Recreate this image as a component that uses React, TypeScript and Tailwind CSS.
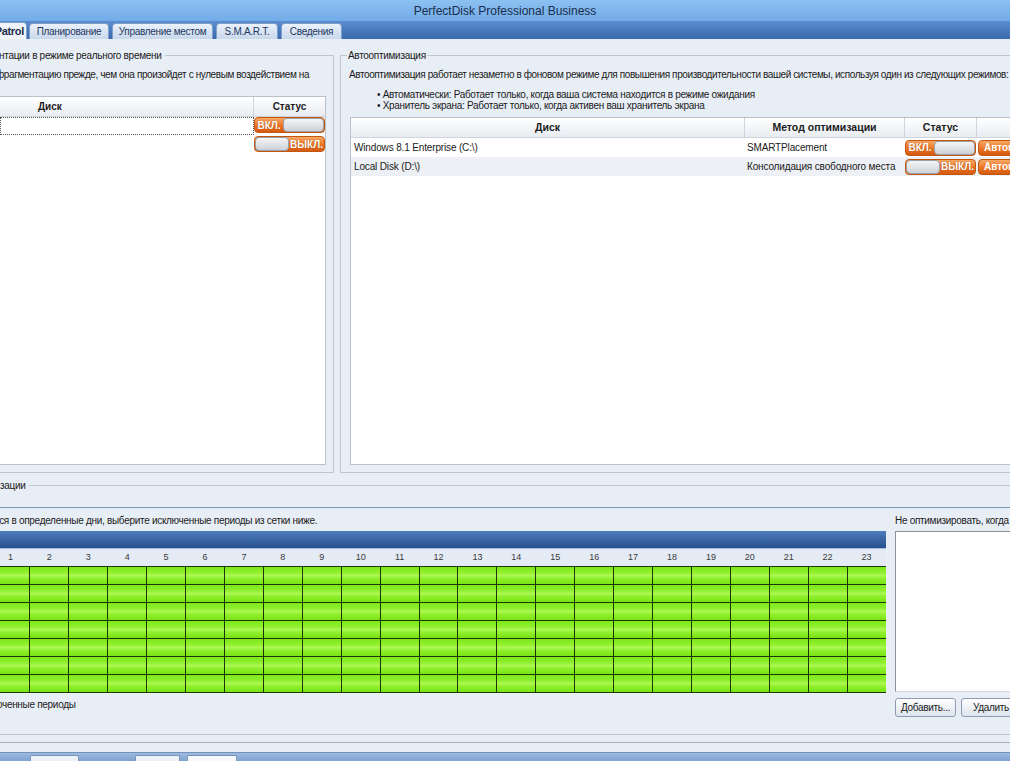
import React from "react";

const hours = Array.from({ length: 23 }, (_, i) => i + 1);
const days = Array.from({ length: 7 }, (_, i) => i);

function Toggle({ on }: { on: boolean }) {
  const label = (
    <div className="flex flex-1 items-center justify-center text-[10px] font-bold tracking-normal text-white [text-shadow:0_0_1px_#9a3c05]">
      {on ? "ВКЛ." : "ВЫКЛ."}
    </div>
  );
  const knob = (
    <div
      className={
        "h-full rounded-[4px] border border-[#9aa1ab] bg-[linear-gradient(to_bottom,#f4f5f7,#cdd1d7)] " +
        (on ? "w-[41px]" : "w-[34px]")
      }
    />
  );
  return (
    <div className="flex h-[16px] w-[71px] overflow-hidden rounded-[4px] border border-[#c2560e] bg-[linear-gradient(to_bottom,#f7a866,#eb7424_55%,#d45a0f)]">
      {on ? label : knob}
      {on ? knob : label}
    </div>
  );
}

function AutoButton() {
  return (
    <div className="ml-[1px] flex h-[16px] w-[72px] shrink-0 items-center overflow-hidden whitespace-nowrap rounded-[4px] border border-[#c2560e] bg-[linear-gradient(to_bottom,#f7a866,#eb7424_55%,#d45a0f)] pl-[5px] text-[10px] font-bold tracking-normal text-white">
      Автоматически
    </div>
  );
}

function Tab({ label, className }: { label: string; className: string }) {
  return (
    <div
      className={
        "flex h-[16px] items-center justify-center whitespace-nowrap rounded-t-[4px] border border-b-0 border-[#7f9ec8] bg-[linear-gradient(to_bottom,#eaf1fa,#c9d8ec)] text-[#1d3760] " +
        className
      }
    >
      {label}
    </div>
  );
}

export default function App() {
  return (
    <div className="flex h-[761px] w-[1010px] flex-col overflow-hidden bg-[#e8eef6] font-['Liberation_Sans',Arial,sans-serif] text-[10px] tracking-[-0.3px] text-[#1b1b1b]">
      {/* title bar */}
      <div className="flex h-[21px] shrink-0 items-center justify-center bg-[linear-gradient(to_bottom,#8cc1f2,#72abe8)] text-[12px] tracking-normal text-[#1b2d4b]">
        PerfectDisk Professional Business
      </div>

      {/* tabs */}
      <div className="flex h-[18px] shrink-0 items-end gap-[2px] bg-[linear-gradient(to_bottom,#5a8ed0,#3b69ad)]">
        <div className="-ml-[20px] flex h-[17px] w-[47px] items-center justify-end rounded-t-[4px] border border-b-0 border-[#7f9ec8] bg-[#f0f4fa] pr-[2px] text-[11px] font-bold text-[#1b2d4b]">
          Patrol
        </div>
        <Tab label="Планирование" className="w-[80px]" />
        <Tab label="Управление местом" className="ml-[1px] w-[101px]" />
        <Tab label="S.M.A.R.T." className="ml-[1px] w-[62px]" />
        <Tab label="Сведения" className="ml-[1px] w-[61px]" />
      </div>

      {/* top groups */}
      <div className="flex shrink-0 gap-[6px] pt-[10px]">
        <fieldset className="-ml-[2px] h-[424px] w-[336px] min-w-0 shrink-0 border border-[#bfc6d0]">
          <legend className="pr-[4px] leading-[13px]">нтации в режиме реального времени</legend>
          <p className="mt-[6px] -ml-[3px] whitespace-nowrap leading-[13px] tracking-[-0.4px]">
            фрагментацию прежде, чем она произойдет с нулевым воздействием на
          </p>
          <div className="mt-[15px] h-[369px] w-[327px] border border-[#b9c1cc] bg-white">
            <div className="flex h-[20px] border-b border-[#cfd5dd] bg-[linear-gradient(to_bottom,#ffffff,#e8ecf1)] font-bold tracking-normal">
              <div className="flex w-[254px] items-center border-r border-[#cfd5dd] pl-[38px]">Диск</div>
              <div className="flex flex-1 items-center justify-center">Статус</div>
            </div>
            <div className="flex h-[18px]">
              <div className="w-[254px] border border-dotted border-[#555]" />
              <div className="flex items-start">
                <Toggle on />
              </div>
            </div>
            <div className="flex h-[18px] pt-[1px]">
              <div className="w-[254px]" />
              <Toggle on={false} />
            </div>
          </div>
        </fieldset>

        <fieldset className="-mr-[30px] h-[424px] min-w-0 flex-1 border border-[#bfc6d0]">
          <legend className="ml-[6px] px-[1px] leading-[13px]">Автооптимизация</legend>
          <p className="mt-[6px] whitespace-nowrap pl-[8px] leading-[13px] tracking-[-0.4px]">
            Автооптимизация работает незаметно в фоновом режиме для повышения производительности вашей системы, используя один из следующих режимов:
          </p>
          <ul className="mt-[8px] pl-[36px] leading-[11px]">
            <li>• Автоматически: Работает только, когда ваша система находится в режиме ожидания</li>
            <li>• Хранитель экрана: Работает только, когда активен ваш хранитель экрана</li>
          </ul>
          <div className="ml-[9px] mt-[6px] h-[348px] border border-[#b9c1cc] bg-white tracking-[-0.15px]">
            <div className="flex h-[20px] border-b border-[#cfd5dd] bg-[linear-gradient(to_bottom,#ffffff,#e8ecf1)] text-[10.5px] font-bold tracking-normal">
              <div className="flex w-[394px] items-center justify-center border-r border-[#cfd5dd]">Диск</div>
              <div className="flex w-[160px] items-center justify-center border-r border-[#cfd5dd]">Метод оптимизации</div>
              <div className="flex w-[72px] items-center justify-center border-r border-[#cfd5dd]">Статус</div>
              <div className="flex-1" />
            </div>
            <div className="flex h-[19px] items-center">
              <div className="w-[394px] shrink-0 pl-[3px]">Windows 8.1 Enterprise (C:\)</div>
              <div className="w-[160px] shrink-0 whitespace-nowrap pl-[2px]">SMARTPlacement</div>
              <div className="w-[72px] shrink-0">
                <Toggle on />
              </div>
              <AutoButton />
            </div>
            <div className="flex h-[19px] items-center bg-[#edf0f5]">
              <div className="w-[394px] shrink-0 pl-[3px]">Local Disk (D:\)</div>
              <div className="w-[160px] shrink-0 whitespace-nowrap pl-[2px]">Консолидация свободного места</div>
              <div className="w-[72px] shrink-0">
                <Toggle on={false} />
              </div>
              <AutoButton />
            </div>
          </div>
        </fieldset>
      </div>

      {/* bottom group */}
      <fieldset className="-ml-[4px] -mr-[20px] mt-[6px] h-[256px] min-w-0 shrink-0 border border-[#bfc6d0]">
        <legend className="px-[3px] leading-[13px]">зации</legend>
        <div className="h-[16px] border-b border-[#7d97bd]" />
        <div className="flex gap-[9px] pt-[6px]">
          <div className="ml-[-6px] w-[895px] shrink-0">
            <p className="whitespace-nowrap pl-[4px] leading-[13px]">
              тся в определенные дни, выберите исключенные периоды из сетки ниже.
            </p>
            <div className="mt-[4px] h-[18px] border-b border-[#a8bddb] bg-[linear-gradient(to_bottom,#4e7cba,#26508e)]" />
            <div className="grid h-[17px] grid-cols-23 bg-[#e4ebf5] text-[9px] tracking-normal text-[#3a3a3a]">
              {hours.map((h) => (
                <div key={h} className="flex items-center justify-center">
                  {h}
                </div>
              ))}
            </div>
            <div className="grid grid-cols-23 gap-px border-y border-[#1c3608] bg-[#1c3608]">
              {days.flatMap((d) =>
                hours.map((h) => (
                  <div
                    key={d + "-" + h}
                    className="h-[17px] bg-[linear-gradient(to_bottom,#7ee71a,#8cef2a_30%,#acf752_50%,#8cef2a_70%,#79e314)]"
                  />
                ))
              )}
            </div>
            <p className="mt-[5px] whitespace-nowrap pl-[4px] leading-[13px]">юченные периоды</p>
          </div>
          <div className="min-w-0 flex-1">
            <p className="whitespace-nowrap leading-[13px]">Не оптимизировать, когда</p>
            <div className="mt-[4px] h-[161px] border border-[#8c9199] border-b-[#d5dae1] border-r-[#d5dae1] bg-white" />
            <div className="mt-[6px] flex gap-[5px]">
              <button className="h-[19px] w-[61px] shrink-0 rounded-[3px] border border-[#8e9bb0] bg-[linear-gradient(to_bottom,#ffffff,#dde4ed)]">
                Добавить...
              </button>
              <button className="h-[19px] w-[60px] shrink-0 rounded-[3px] border border-[#8e9bb0] bg-[linear-gradient(to_bottom,#ffffff,#dde4ed)]">
                Удалить
              </button>
            </div>
          </div>
        </div>
      </fieldset>

      <div className="h-[8px] shrink-0 border-b border-[#a9b0ba]" />
      <div className="h-[9px] shrink-0" />
      <div className="flex flex-1 items-end border-t border-[#7393bb] bg-[linear-gradient(to_bottom,#9dbbe0,#7fa2cf)]">
        <div className="ml-[30px] h-[6px] w-[49px] rounded-t-[2px] border border-b-0 border-[#7d93b3] bg-[#eef2f8]" />
        <div className="ml-[56px] h-[6px] w-[45px] rounded-t-[2px] border border-b-0 border-[#7d93b3] bg-[#eef2f8]" />
        <div className="ml-[7px] h-[6px] w-[50px] rounded-t-[2px] border border-b-0 border-[#7d93b3] bg-[#f6f8fb]" />
      </div>
    </div>
  );
}
